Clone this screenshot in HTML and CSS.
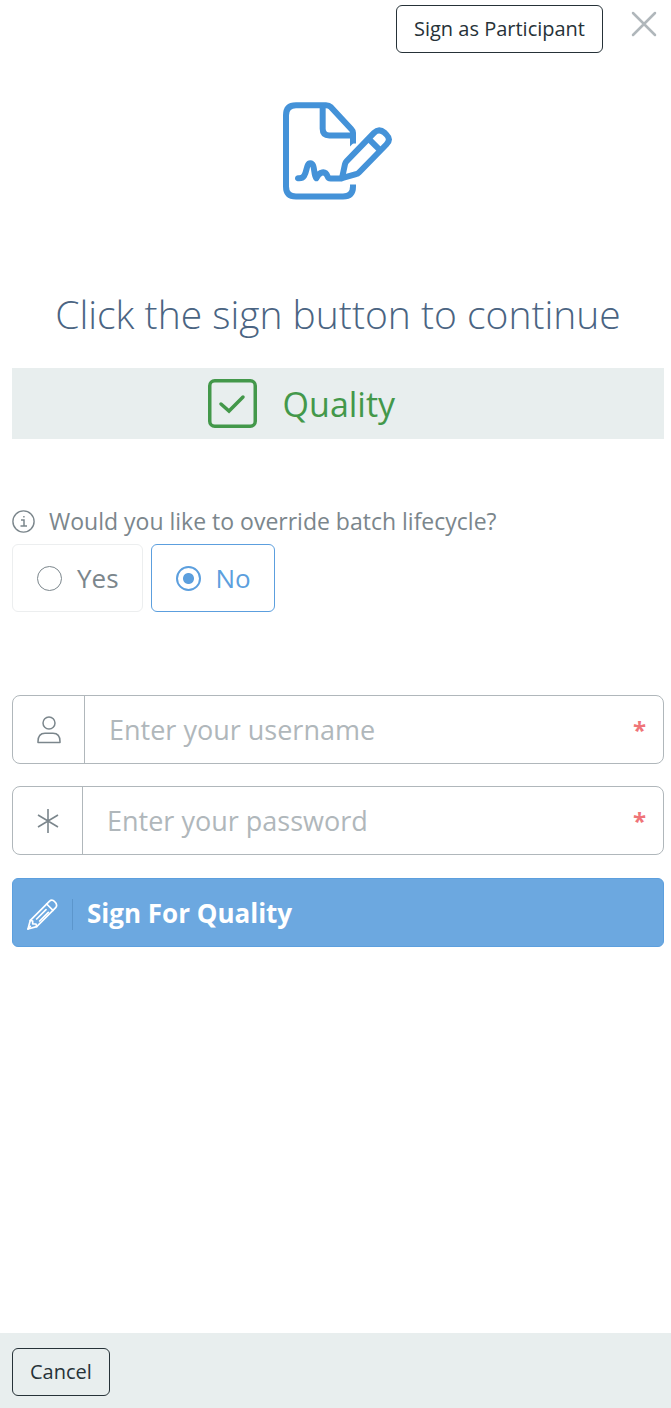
FILE: index.html
```
<!DOCTYPE html>
<html lang="en">
<head>
    <meta charset="UTF-8">
    <meta name="viewport" content="width=device-width, initial-scale=1.0">
    <title>Sign For Quality</title>
    <link rel="stylesheet" href="styles.css">
</head>
<body>
    <header class="top-bar">
        <button type="button" class="btn-outline">Sign as Participant</button>
        <button type="button" class="close" aria-label="Close">
            <svg width="26" height="26" viewBox="0 0 26 26" fill="none" stroke="#b0b7bb" stroke-width="2.5" stroke-linecap="round">
                <path d="M2 2L24 24M24 2L2 24"/>
            </svg>
        </button>
    </header>

    <main class="content">
        <svg class="sign-icon" width="110" height="98" viewBox="39 36 330 293" fill="none" stroke="#4492d8" stroke-width="18" stroke-linejoin="round">
            <path d="M249 160V128Q249 122 245 118L183 51Q177 45 168 45H78Q48 45 48 75V289Q48 319 78 319H219Q249 319 249 289V283"/>
            <path d="M240 155V169L258 151Z" fill="#4492d8" stroke="none"/>
            <path d="M158 45V116Q158 136 178 136H249"/>
            <path d="M84 264C116 268 104 219 121 219C136 219 130 256 139 264C148 244 166 240 173 259Q175 265 182 265H213" stroke-linecap="round"/>
            <path d="M216 264L225 222Q226 217 230 213L312 128Q327 113 344 128L349 133Q364 148 349 163L267 247Q263 251 258 252Z"/>
            <path d="M296 146L330 180"/>
        </svg>

        <h1 class="title">Click the sign button to continue</h1>

        <div class="role">
            <svg width="49" height="49" viewBox="0 0 49 49" fill="none" stroke="#43984a" stroke-width="3.5">
                <rect x="1.75" y="1.75" width="45.5" height="45.5" rx="5"/>
                <path d="M13 25L21 32L35 18" stroke-linecap="round" stroke-linejoin="miter"/>
            </svg>
            <span>Quality</span>
        </div>

        <form class="sign-form">
            <fieldset class="override">
                <legend>
                    <svg width="23" height="23" viewBox="0 0 23 23" fill="none" stroke="#7b868c" stroke-width="1.4">
                        <circle cx="11.5" cy="11.5" r="10.6"/>
                        <path d="M9 10H12V16M8.5 16H15M11.2 6.8H12.6" stroke-width="1.5"/>
                    </svg>
                    <span>Would you like to override batch lifecycle?</span>
                </legend>
                <div class="options">
                    <label class="option"><input type="radio" name="override" value="yes">Yes</label>
                    <label class="option"><input type="radio" name="override" value="no" checked>No</label>
                </div>
            </fieldset>

            <div class="field">
                <label for="username" aria-label="Username">
                    <svg width="24" height="28" viewBox="0 0 24 28" fill="none" stroke="#7b868c" stroke-width="1.5">
                        <circle cx="12" cy="7" r="6"/>
                        <path d="M1 26.5V25.5C1 20 4 17.2 8 17.2H16C20 17.2 23 20 23 25.5V26.5Z" stroke-linejoin="round"/>
                    </svg>
                </label>
                <input type="text" id="username" placeholder="Enter your username" required>
                <span class="required">*</span>
            </div>

            <div class="field">
                <label for="password" aria-label="Password">
                    <svg width="22" height="24" viewBox="0 0 22 24" stroke="#7b868c" stroke-width="1.6">
                        <path d="M11 0V24M1 6L21 18M21 6L1 18"/>
                    </svg>
                </label>
                <input type="password" id="password" placeholder="Enter your password" required>
                <span class="required">*</span>
            </div>

            <button type="submit" class="btn-sign">
                <span class="btn-sign-icon">
                    <svg width="31" height="31" viewBox="0 0 93 93" fill="none" stroke="#fff" stroke-width="5" stroke-linejoin="round" stroke-linecap="round">
                        <path d="M3 90L10 64L67 7Q75 0 83 8Q93 17 86 26L29 83Z"/>
                        <path d="M59 15L78 34M10 64L17 66V75H27L29 83M29 60L57 32M38 66L64 40M3 90L10 82"/>
                    </svg>
                </span>
                Sign For Quality
            </button>
        </form>
    </main>

    <footer class="bottom-bar">
        <button type="button" class="btn-outline">Cancel</button>
    </footer>
</body>
</html>
```
FILE: styles.css
```
* {
    box-sizing: border-box;
}
body {
    font-family: "Open Sans", sans-serif;
    background-color: #fff;
    color: #7b868c;
    margin: 0;
    min-height: 100vh;
    display: flex;
    flex-direction: column;
}
button, input {
    font-family: inherit;
}
button {
    cursor: pointer;
}
.top-bar {
    display: flex;
    justify-content: flex-end;
    align-items: flex-start;
    gap: 28px;
    padding: 5px 14px 0 12px;
}
.btn-outline {
    height: 48px;
    padding: 0 17px 2px;
    font-size: 20px;
    color: #263238;
    background-color: transparent;
    border: 1px solid #263238;
    border-radius: 6px;
}
.close {
    padding: 6px 0;
    border: none;
    background: none;
}
.close svg {
    display: block;
}
.content {
    flex: 1;
    padding: 49px 7px 0 12px;
}
.sign-icon {
    display: block;
    margin: 0 auto;
}
.title {
    margin: 87px 0 27px;
    font-size: 39px;
    line-height: 54px;
    font-weight: 300;
    text-align: center;
    color: #4a6482;
}
.role {
    display: flex;
    align-items: center;
    gap: 26px;
    height: 71px;
    padding-left: 30%;
    background-color: #e8eeee;
    color: #43984a;
    font-size: 34px;
}
.override {
    margin: 66px 0 83px;
    padding: 0;
    border: none;
}
.override legend {
    display: flex;
    align-items: center;
    gap: 14px;
    padding: 0;
    font-size: 23px;
    line-height: 32px;
}
.options {
    display: flex;
    gap: 8px;
    padding-top: 7px;
}
.option {
    display: flex;
    align-items: center;
    gap: 15px;
    height: 68px;
    padding: 0 23px 0 24px;
    font-size: 26px;
    border: 1px solid #eceeef;
    border-radius: 6px;
    cursor: pointer;
}
.option input {
    appearance: none;
    width: 25px;
    height: 25px;
    margin: 0;
    border: 1px solid #7b868c;
    border-radius: 50%;
}
.option:has(input:checked) {
    color: #5c9fde;
    border-color: #5c9fde;
}
.option input:checked {
    border: 2px solid #5c9fde;
    background: radial-gradient(circle, #5c9fde 5px, transparent 6px);
}
.field {
    display: flex;
    height: 69px;
    margin-bottom: 22px;
    border: 1px solid #b0b7bb;
    border-radius: 8px;
}
.field label {
    display: flex;
    align-items: center;
    padding: 0 23px 0 24px;
    border-right: 1px solid #b0b7bb;
}
.field input {
    flex: 1;
    min-width: 0;
    padding: 0 24px;
    font-size: 27px;
    color: #7b868c;
    background: none;
    border: none;
    outline: none;
}
.field input::placeholder {
    color: #b0b7bb;
}
.required {
    align-self: center;
    padding-right: 17px;
    font-size: 24px;
    font-weight: 700;
    color: #ef7478;
}
.btn-sign {
    display: flex;
    align-items: center;
    width: 100%;
    height: 69px;
    margin-top: 23px;
    padding: 0 14px;
    font-size: 26px;
    font-weight: 700;
    color: #fff;
    background-color: #6ca8e0;
    border: 1px solid #5c9fde;
    border-radius: 6px;
}
.btn-sign-icon {
    height: 31px;
    margin-top: 4px;
    margin-right: 14px;
    padding-right: 14px;
    border-right: 1px solid #5c96cc;
}
.bottom-bar {
    padding: 15px 12px 12px;
    background-color: #e8eeee;
}
```
